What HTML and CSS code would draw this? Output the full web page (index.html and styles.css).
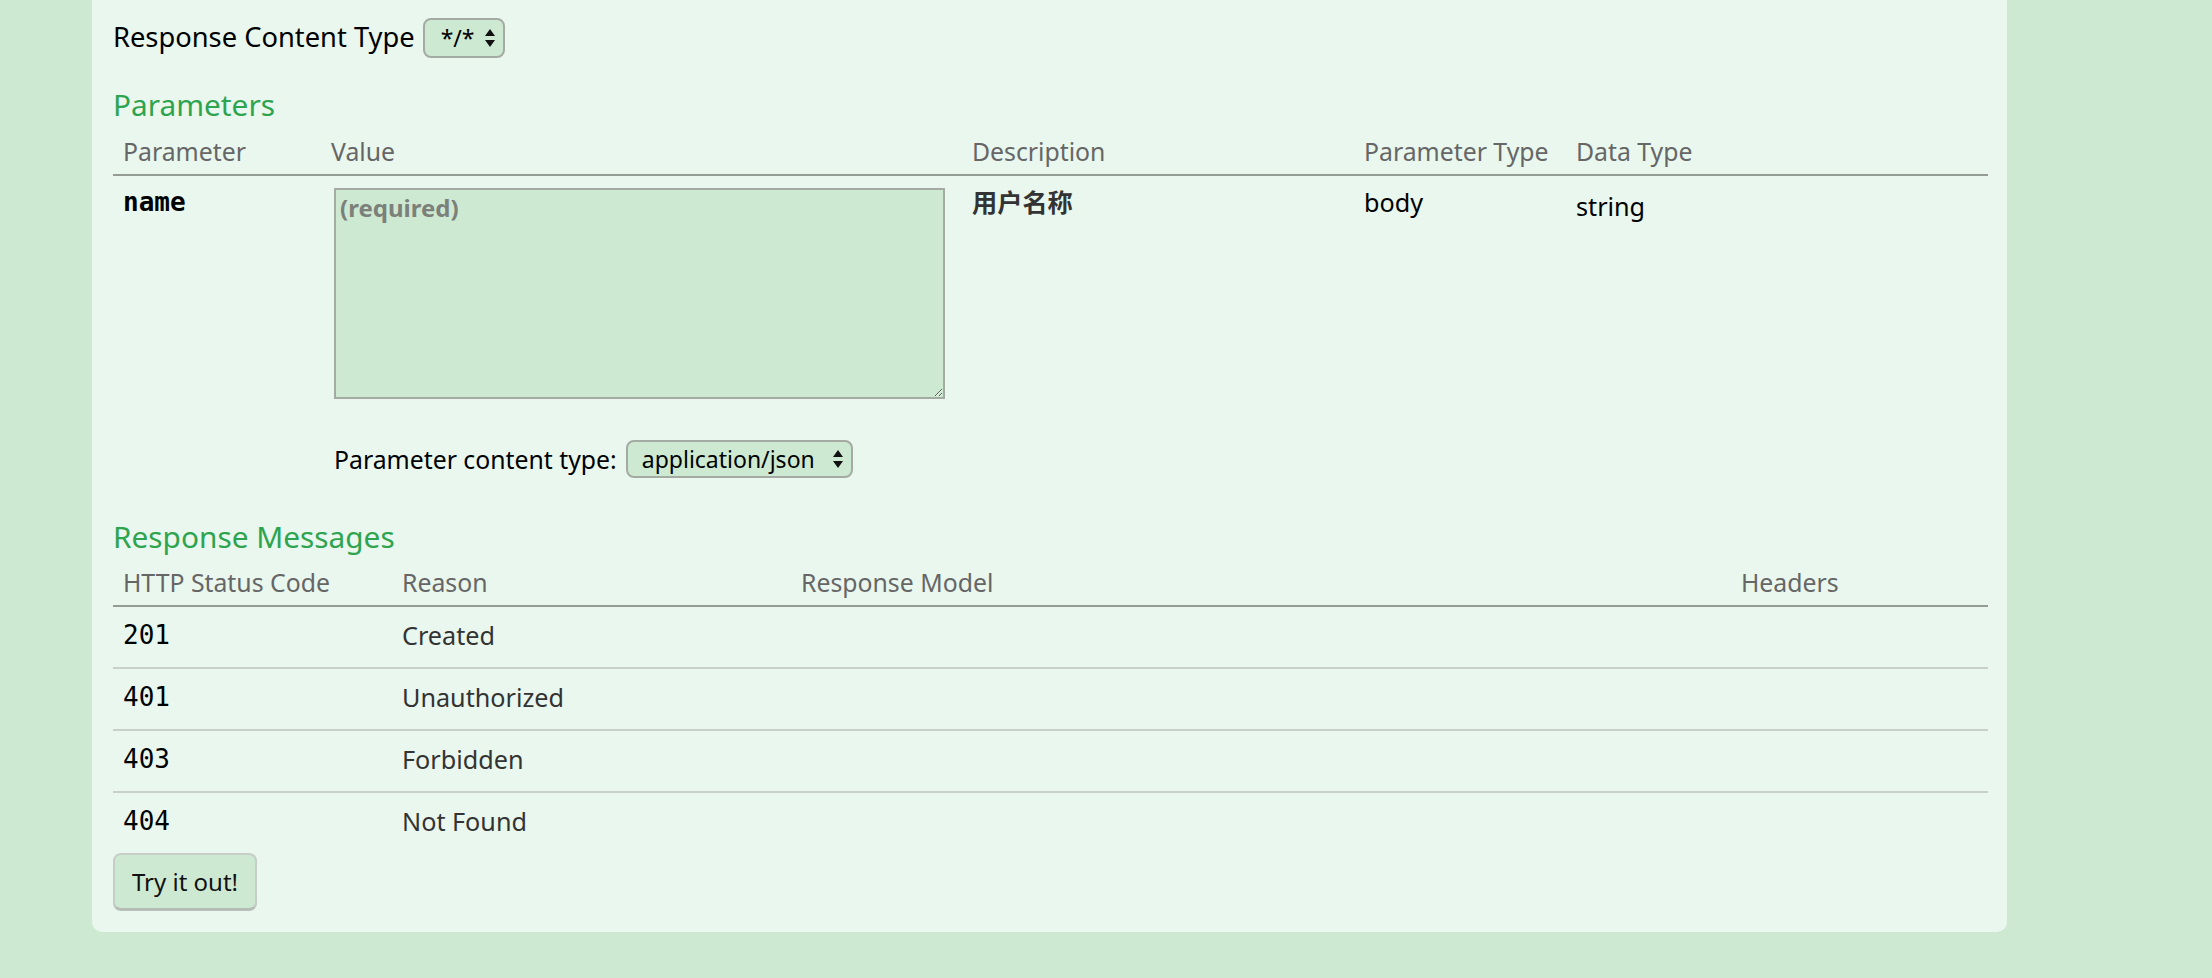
FILE: index.html
```html
<!DOCTYPE html>
<html lang="en">
<head>
<meta charset="utf-8">
<title>Operation</title>
<link rel="stylesheet" href="styles.css">
</head>
<body>
<div class="panel">
  <div class="ct-row">
    <span class="ct-label">Response Content Type</span>
    <span class="fake-select small"><span>*/*</span><svg class="arrows" width="10" height="20" viewBox="0 0 10 20"><polygon points="0,8 5,1 10,8"/><polygon points="0,12 5,19 10,12"/></svg></span>
  </div>

  <h4>Parameters</h4>
  <table class="params">
    <colgroup><col class="pc1"><col class="pc2"><col class="pc3"><col class="pc4"><col class="pc5"></colgroup>
    <thead>
      <tr><th>Parameter</th><th>Value</th><th>Description</th><th>Parameter Type</th><th>Data Type</th></tr>
    </thead>
    <tbody>
      <tr>
        <td class="code-name">name</td>
        <td>
          <textarea class="body-input" placeholder="(required)"></textarea>
          <div class="param-ct">
            <span>Parameter content type:</span>
            <span class="fake-select wide"><span>application/json</span><svg class="arrows" width="10" height="20" viewBox="0 0 10 20"><polygon points="0,8 5,1 10,8"/><polygon points="0,12 5,19 10,12"/></svg></span>
          </div>
        </td>
        <td class="desc"><strong>用户名称</strong></td>
        <td class="plain">body</td>
        <td class="plain dtype">string</td>
      </tr>
    </tbody>
  </table>

  <h4>Response Messages</h4>
  <table class="responses">
    <colgroup><col class="rc1"><col class="rc2"><col class="rc3"><col class="rc4"></colgroup>
    <thead>
      <tr><th>HTTP Status Code</th><th>Reason</th><th>Response Model</th><th>Headers</th></tr>
    </thead>
    <tbody>
      <tr><td class="code">201</td><td>Created</td><td></td><td></td></tr>
      <tr><td class="code">401</td><td>Unauthorized</td><td></td><td></td></tr>
      <tr><td class="code">403</td><td>Forbidden</td><td></td><td></td></tr>
      <tr><td class="code">404</td><td>Not Found</td><td></td><td></td></tr>
    </tbody>
  </table>

  <button class="try-btn" type="button">Try it out!</button>
</div>
</body>
</html>
```

FILE: styles.css
```css
* { box-sizing: border-box; }

html, body {
  margin: 0;
  padding: 0;
}

body {
  background: #cde9d1;
  font-family: "Noto Sans", "Open Sans", "Noto Sans CJK SC", sans-serif;
  font-size: 28px;
  line-height: 1;
  color: #000;
  height: 978px;
  overflow: hidden;
}

.panel {
  margin-left: 92px;
  width: 1915px;
  background: #e9f7ee;
  border-radius: 0 0 10px 10px;
  padding: 18px 19px 22px 21px;
}

.ct-row {
  display: flex;
  align-items: center;
  gap: 8px;
  height: 40px;
}

.ct-label {
  font-size: 27.3px;
  color: #000;
  padding-bottom: 2px;
}

.fake-select {
  display: inline-flex;
  align-items: center;
  border: 2px solid #a3aba3;
  border-radius: 8px;
  background: #cde9d1;
  font-size: 23px;
  color: #000;
  gap: 10px;
}

.fake-select.small {
  height: 40px;
  width: 82px;
  padding: 0 10px 0 16px;
}

.fake-select.wide {
  height: 38px;
  width: 227px;
  padding: 0 8px 0 14px;
  justify-content: space-between;
}

.arrows { fill: #111; flex: none; }

h4 {
  margin: 0;
  padding: 32px 0 10px;
  font-size: 29.8px;
  font-weight: normal;
  line-height: 1;
  color: #2ea44f;
}

table {
  width: 100%;
  border-collapse: collapse;
  table-layout: fixed;
}

.pc1 { width: 208px; }
.pc2 { width: 641px; }
.pc3 { width: 392px; }
.pc4 { width: 212px; }
.pc5 { width: 422px; }

.rc1 { width: 279px; }
.rc2 { width: 399px; }
.rc3 { width: 940px; }
.rc4 { width: 257px; }

th {
  text-align: left;
  font-weight: normal;
  color: #666;
  font-size: 24.8px;
  line-height: 1;
  padding: 9px 10px 10px;
  border-bottom: 2px solid #949c94;
}

td {
  vertical-align: top;
  padding: 10px 10px 14px;
  font-size: 25.2px;
  line-height: 36px;
  color: #333;
}

.responses tbody tr td { border-bottom: 2px solid #c9cfca; }
.responses tbody tr:last-child td { border-bottom: none; }

.params td {
  line-height: 28px;
  padding: 12px 10px;
}

.params td.dtype { padding-top: 16px; }

.code-name {
  font-family: "DejaVu Sans Mono", "Liberation Mono", monospace;
  font-weight: bold;
  font-size: 26px;
  color: #000;
}

.code {
  font-family: "DejaVu Sans Mono", "Liberation Mono", monospace;
  font-size: 26px;
  color: #000;
}

.body-input {
  display: block;
  width: 611px;
  height: 211px;
  margin: 0 0 0 3px;
  border: 2px solid #a3aba3;
  background: #cde9d1;
  font-family: "Noto Sans", "Open Sans", sans-serif;
  font-weight: bold;
  font-size: 24px;
  line-height: 30px;
  padding: 3px 4px;
  color: #000;
}

.body-input::placeholder { color: #7b807b; opacity: 1; }

.param-ct {
  display: flex;
  align-items: center;
  gap: 9px;
  margin: 41px 0 0 3px;
  color: #000;
  font-size: 24.8px;
}

.desc { color: #333; }
.desc strong { font-weight: bold; }

.plain { color: #000; }

.try-btn {
  display: block;
  width: 144px;
  height: 57px;
  padding: 0;
  margin: 0;
  border: 2px solid #c6cec7;
  border-bottom-color: #b4bcb5;
  border-radius: 8px;
  background: #cde9d1;
  font-family: "Noto Sans", "Open Sans", sans-serif;
  font-size: 24px;
  color: #111;
  box-shadow: 0 1px 0 #b9c1ba;
}
```
